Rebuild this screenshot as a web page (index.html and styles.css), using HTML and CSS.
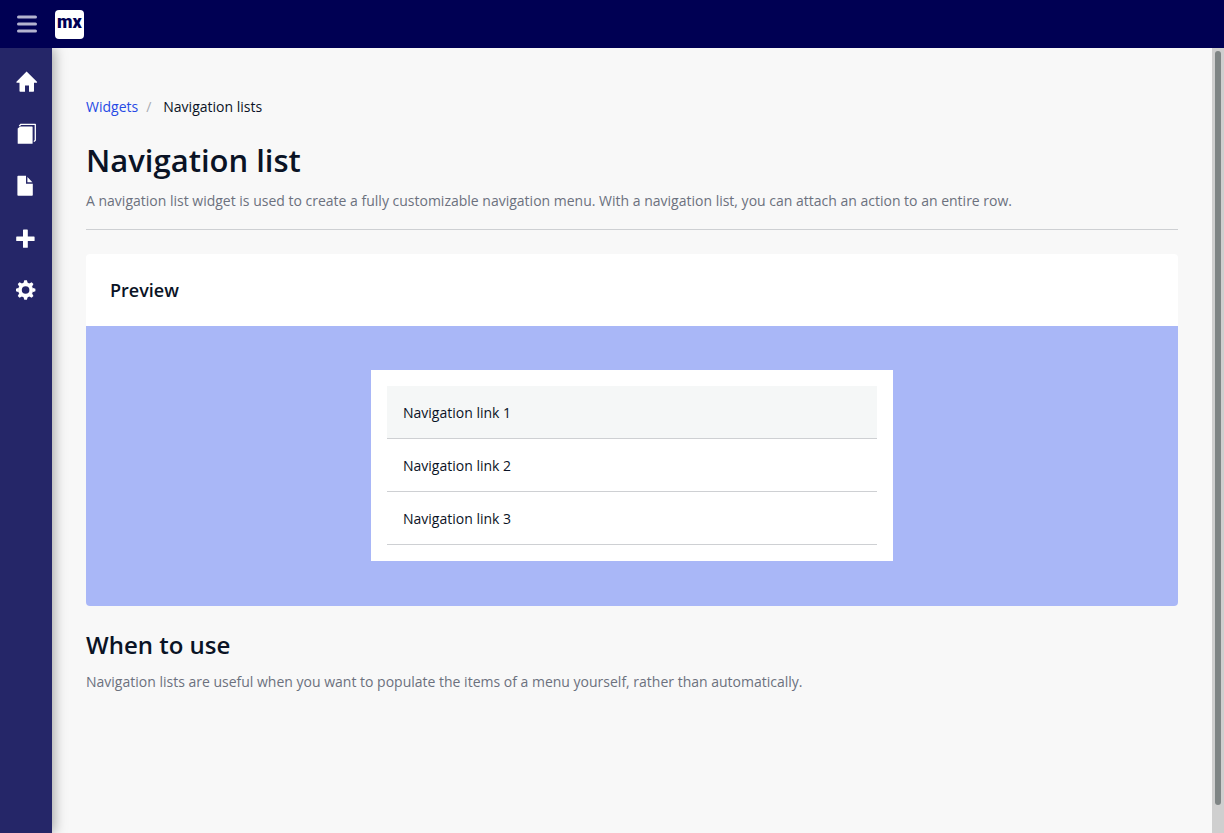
FILE: index.html
```html
<!DOCTYPE html>
<html lang="en">
<head>
<meta charset="utf-8">
<title>Navigation list</title>
<meta name="viewport" content="width=device-width, initial-scale=1">
<link rel="stylesheet" href="styles.css">
</head>
<body>
<header class="topbar">
  <button class="menu-toggle" type="button" aria-label="Toggle menu">
    <svg width="20" height="18" viewBox="0 0 20 18"><g fill="currentColor"><rect y="0.4" width="20" height="3" rx="1.5"/><rect y="7.5" width="20" height="3" rx="1.5"/><rect y="14.6" width="20" height="3" rx="1.5"/></g></svg>
  </button>
  <a class="logo" href="#" aria-label="Home"><span class="logo-text">mx</span></a>
</header>
<div class="layout">
  <nav class="sidebar" aria-label="Main">
    <a class="side-link" href="#" aria-label="Home"><svg width="22" height="22" viewBox="0 0 22 22"><path fill="currentColor" d="M10.6 .5 21.2 11 20.8 11.7H18V20Q18 20.7 17.3 20.7H13V14.5H9V20.7H4.2Q3.5 20.7 3.5 20V11.7H.7L.2 11Z"/></svg></a>
    <a class="side-link" href="#" aria-label="Pages"><svg width="22" height="22" viewBox="0 0 22 22"><path fill="currentColor" d="M1.7 5.4 4.2 3.4H16Q16.6 3.4 16.6 4V20.2Q16.6 20.8 16 20.8H2.3Q1.7 20.8 1.7 20.2Z"/><path fill="none" stroke="currentColor" stroke-width="1.3" stroke-linejoin="round" d="M3.2 3.1 4.9 1.3H19.3V17.2L17.9 18.6"/></svg></a>
    <a class="side-link" href="#" aria-label="File"><svg width="22" height="22" viewBox="0 0 22 22"><path fill="currentColor" d="M2.2 .8H10V8.8H16.8V20Q16.8 20.8 16 20.8H2.2Q1.4 20.8 1.4 20V1.6Q1.4 .8 2.2 .8ZM11.4 2.1 16.4 7.3H11.4Z"/></svg></a>
    <a class="side-link" href="#" aria-label="Add"><svg width="22" height="22" viewBox="0 0 22 22"><path fill="currentColor" d="M7.6 2.6H11.2Q11.8 2.6 11.8 3.2V9.6H18Q18.6 9.6 18.6 10.2V13.4Q18.6 14 18 14H11.8V20.2Q11.8 20.8 11.2 20.8H7.6Q7 20.8 7 20.2V14H.8Q.2 14 .2 13.4V10.2Q.2 9.6.8 9.6H7V3.2Q7 2.6 7.6 2.6Z"/></svg></a>
    <a class="side-link" href="#" aria-label="Settings"><svg width="22" height="22" viewBox="0 0 22 22"><circle cx="9.6" cy="11" r="5.6" fill="none" stroke="currentColor" stroke-width="3.6"/><g fill="currentColor" transform="translate(9.6 11)"><path id="teeth" d="M-2.2-6.8 -1.3-9.8H1.3L2.2-6.8ZM-2.2 6.8 -1.3 9.8H1.3L2.2 6.8Z"/><use href="#teeth" transform="rotate(45)"/><use href="#teeth" transform="rotate(90)"/><use href="#teeth" transform="rotate(135)"/></g></svg></a>
  </nav>
  <main class="content">
    <nav aria-label="Breadcrumb">
      <ol class="breadcrumb">
        <li><a class="crumb-link" href="#">Widgets</a></li>
        <li class="crumb-separator" aria-hidden="true">/</li>
        <li aria-current="page">Navigation lists</li>
      </ol>
    </nav>
    <header class="page-header">
      <h1 class="page-title">Navigation list</h1>
      <p class="description">A navigation list widget is used to create a fully customizable navigation menu. With a navigation list, you can attach an action to an entire row.</p>
    </header>
    <section class="card">
      <h2 class="card-title">Preview</h2>
      <div class="preview">
        <div class="preview-panel">
          <ul class="navlist">
            <li><a class="navlist-item is-active" href="#">Navigation link 1</a></li>
            <li><a class="navlist-item" href="#">Navigation link 2</a></li>
            <li><a class="navlist-item" href="#">Navigation link 3</a></li>
          </ul>
        </div>
      </div>
    </section>
    <section>
      <h2 class="section-title">When to use</h2>
      <p class="description">Navigation lists are useful when you want to populate the items of a menu yourself, rather than automatically.</p>
    </section>
  </main>
  <div class="scroll-track" aria-hidden="true"><div class="scroll-thumb"></div></div>
</div>
</body>
</html>
```

FILE: styles.css
```css
* { box-sizing: border-box; }

body {
  margin: 0;
  height: 100vh;
  display: flex;
  flex-direction: column;
  background: #f8f8f8;
  color: #0a1325;
  font: 14px/20px "Open Sans", sans-serif;
}

a { color: inherit; text-decoration: none; }
h1, h2, p, ul, ol { margin: 0; padding: 0; }
ul, ol { list-style: none; }
svg { display: block; }

.topbar {
  flex: none;
  height: 48px;
  display: flex;
  align-items: center;
  gap: 18px;
  padding-left: 17px;
  background: #000053;
}

.menu-toggle {
  padding: 0;
  border: 0;
  background: none;
  color: #b3b3cf;
}

.logo {
  width: 29px;
  height: 29px;
  display: flex;
  align-items: center;
  justify-content: center;
  border-radius: 4px;
  background: #fff;
  color: #000053;
}

.logo-text {
  padding-bottom: 4px;
  font: 900 18px/24px "Roboto", sans-serif;
}

.layout {
  flex: 1;
  min-height: 0;
  display: flex;
}

.sidebar {
  flex: none;
  width: 52px;
  padding-top: 8px;
  background: #252668;
  box-shadow: 2px 0 12px rgba(0, 0, 0, 0.35);
  clip-path: inset(0 -24px 0 0);
}

.side-link {
  height: 52px;
  display: flex;
  align-items: center;
  padding-left: 16px;
  color: #fff;
}

.content {
  flex: 1;
  min-width: 0;
  padding: 49px 34px 24px;
  overflow: hidden;
}

.breadcrumb {
  display: flex;
}

.crumb-link { color: #264ae5; }

.crumb-separator {
  padding: 0 12px 0 8px;
  color: #a9acb3;
}

.page-header {
  padding: 22px 0 18px;
  border-bottom: 1px solid #ced0d3;
}

.page-title {
  margin-bottom: 10px;
  font-size: 31px;
  line-height: 42px;
  font-weight: 600;
}

.description { color: #6c717e; }

.card {
  margin: 24px 0;
  border-radius: 4px;
  background: #fff;
  overflow: hidden;
}

.card-title {
  padding: 24px;
  font-size: 18px;
  line-height: 24px;
  font-weight: 600;
}

.preview {
  display: flex;
  justify-content: center;
  padding: 44px 24px 45px;
  background: #a9b7f7;
}

.preview-panel {
  width: 50%;
  padding: 16px;
  background: #fff;
}

.navlist-item {
  display: block;
  padding: 17px 16px 15px;
  border-bottom: 1px solid #ced0d3;
}

.is-active { background: #f5f7f7; }

.section-title {
  margin-bottom: 12px;
  font-size: 24px;
  line-height: 30px;
  font-weight: 600;
}

.scroll-track {
  flex: none;
  width: 12px;
  padding: 3px;
  background: #cfcfcf;
}

.scroll-thumb {
  height: 96.8%;
  border-radius: 3px;
  background: #7f8585;
}
```
